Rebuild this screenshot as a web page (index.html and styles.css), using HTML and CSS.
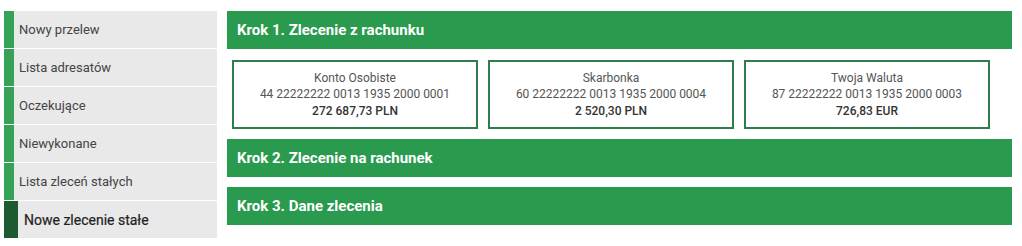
FILE: index.html
```html
<!DOCTYPE html>
<html lang="pl">
<head>
<meta charset="utf-8">
<title>Nowe zlecenie stałe</title>
<link rel="stylesheet" href="styles.css">
</head>
<body>
<div class="page">
  <nav class="sidebar">
    <a class="nav-item" href="#">Nowy przelew</a>
    <a class="nav-item" href="#">Lista adresatów</a>
    <a class="nav-item" href="#">Oczekujące</a>
    <a class="nav-item" href="#">Niewykonane</a>
    <a class="nav-item" href="#">Lista zleceń stałych</a>
    <a class="nav-item active" href="#">Nowe zlecenie stałe</a>
  </nav>
  <main class="main">
    <section class="step">
      <h2 class="step-header">Krok 1. Zlecenie z rachunku</h2>
      <div class="accounts">
        <div class="account">
          <div class="acc-name">Konto Osobiste</div>
          <div class="acc-number">44 22222222 0013 1935 2000 0001</div>
          <div class="acc-balance">272 687,73 PLN</div>
        </div>
        <div class="account">
          <div class="acc-name">Skarbonka</div>
          <div class="acc-number">60 22222222 0013 1935 2000 0004</div>
          <div class="acc-balance">2 520,30 PLN</div>
        </div>
        <div class="account">
          <div class="acc-name">Twoja Waluta</div>
          <div class="acc-number">87 22222222 0013 1935 2000 0003</div>
          <div class="acc-balance">726,83 EUR</div>
        </div>
      </div>
    </section>
    <section class="step">
      <h2 class="step-header">Krok 2. Zlecenie na rachunek</h2>
    </section>
    <section class="step">
      <h2 class="step-header">Krok 3. Dane zlecenia</h2>
    </section>
  </main>
</div>
</body>
</html>
```

FILE: styles.css
```css
* { box-sizing: border-box; }

html, body {
  margin: 0;
  padding: 0;
  background: #ffffff;
}

body {
  font-family: Roboto, "Liberation Sans", Arial, sans-serif;
  color: #444;
}

.page {
  display: flex;
  align-items: flex-start;
  gap: 10px;
  padding: 11px 10px 0 4px;
}

.sidebar {
  width: 213px;
  flex: none;
  display: flex;
  flex-direction: column;
  gap: 1px;
}

.nav-item {
  display: flex;
  align-items: center;
  height: 37px;
  background: #e9e9e9;
  border-left: 10px solid #36a257;
  padding-left: 5px;
  font-size: 13px;
  color: #444;
  text-decoration: none;
}

.nav-item.active {
  border-left: 14px solid #1c5a2f;
  padding-left: 6px;
  color: #222;
  font-size: 14px;
  -webkit-text-stroke: 0.2px #222;
}

.main {
  flex: 1;
  display: flex;
  flex-direction: column;
  gap: 10px;
}

.step-header {
  margin: 0;
  height: 38px;
  display: flex;
  align-items: center;
  padding-left: 10px;
  background: #2a9a4f;
  color: #fff;
  font-size: 15px;
  font-weight: 700;
}

.accounts {
  display: flex;
  gap: 10px;
  padding: 11px 0 0 5px;
}

.account {
  width: 246px;
  height: 69px;
  border: 2px solid #2e7d4a;
  display: flex;
  flex-direction: column;
  justify-content: center;
  align-items: center;
  font-size: 12px;
  line-height: 16.5px;
  color: #555;
  text-align: center;
}

.acc-balance {
  font-weight: 500;
  color: #333;
}
```
